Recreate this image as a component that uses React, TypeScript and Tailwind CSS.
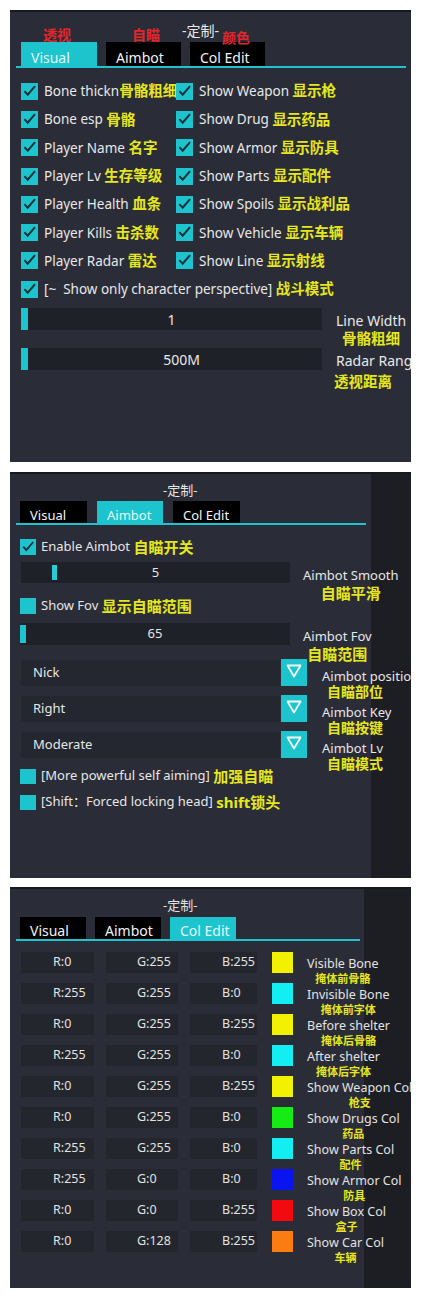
import React from "react"

const FONT = "font-['Noto_Sans','Noto_Sans_CJK_SC',sans-serif]"

const visualRows = [
  ["Bone thickn", "骨骼粗细", "Show Weapon", "显示枪"],
  ["Bone esp", "骨骼", "Show Drug", "显示药品"],
  ["Player Name", "名字", "Show Armor", "显示防具"],
  ["Player Lv", "生存等级", "Show Parts", "显示配件"],
  ["Player Health", "血条", "Show Spoils", "显示战利品"],
  ["Player Kills", "击杀数", "Show Vehicle", "显示车辆"],
  ["Player Radar", "雷达", "Show Line", "显示射线"]
]

const colors = [
  { r: 0, g: 255, b: 255, sw: "bg-[#f2f200]", en: "Visible Bone", zh: "掩体前骨骼" },
  { r: 255, g: 255, b: 0, sw: "bg-[#12eef2]", en: "Invisible Bone", zh: "掩体前字体" },
  { r: 0, g: 255, b: 255, sw: "bg-[#f2f200]", en: "Before shelter", zh: "掩体后骨骼" },
  { r: 255, g: 255, b: 0, sw: "bg-[#12eef2]", en: "After shelter", zh: "掩体后字体" },
  { r: 0, g: 255, b: 255, sw: "bg-[#f2f200]", en: "Show Weapon Col", zh: "枪支" },
  { r: 0, g: 255, b: 0, sw: "bg-[#14ec14]", en: "Show Drugs Col", zh: "药品" },
  { r: 255, g: 255, b: 0, sw: "bg-[#12eef2]", en: "Show Parts Col", zh: "配件" },
  { r: 255, g: 0, b: 0, sw: "bg-[#0a14f0]", en: "Show Armor Col", zh: "防具" },
  { r: 0, g: 0, b: 255, sw: "bg-[#f20a10]", en: "Show Box Col", zh: "盒子" },
  { r: 0, g: 128, b: 255, sw: "bg-[#fb7d12]", en: "Show Car Col", zh: "车辆" }
]

function Box({ checked, size }: { checked?: boolean; size: string }) {
  return (
    <span className={`${size} shrink-0 bg-[#1dc4cd] flex`}>
      {checked && (
        <svg viewBox="0 0 16 16" className="w-full h-full">
          <path d="M3.2 7.6l3.1 3.4 6.9-8" fill="none" stroke="#16303a" strokeWidth="1.9" />
        </svg>
      )}
    </span>
  )
}

function Zh({ children, className = "" }: { children: React.ReactNode; className?: string }) {
  return <span className={`font-bold text-[#e6e61e] ${className}`}>{children}</span>
}

function Tab({ label, on, className }: { label: string; on?: boolean; className: string }) {
  return (
    <div
      className={`${className} shrink-0 flex items-end pl-[10px] ${
        on ? "bg-[#1dc4cd] text-[#e2f8f8]" : "bg-black text-[#f2f2f2]"
      }`}
    >
      {label}
    </div>
  )
}

function Triangle() {
  return (
    <svg viewBox="0 0 16 14" className="w-[16px] h-[14px]">
      <path d="M1.5 1.5H14.5L8 12.5Z" fill="none" stroke="#f4ffff" strokeWidth="1.8" strokeLinejoin="round" />
    </svg>
  )
}

function VisualPanel() {
  return (
    <section className="relative w-[401px] h-[452px] shrink-0 overflow-hidden bg-[#2a2d37] border-t-2 border-[#17191e] text-[#e8e8e8]">
      <div className="h-[30px] pt-[10px] pl-[172px] text-[14px] leading-[18px]">-定制-</div>
      <span className="absolute left-[33px] top-[15px] text-[14px] leading-[16px] font-bold text-[#e3262c]">透视</span>
      <span className="absolute left-[122px] top-[15px] text-[14px] leading-[16px] font-bold text-[#e3262c]">自瞄</span>
      <span className="absolute left-[212px] top-[18px] text-[14px] leading-[16px] font-bold text-[#e3262c]">颜色</span>
      <div className="ml-[6px] w-[390px] pl-[5px] flex gap-[9px] border-b-2 border-[#1dc4cd] text-[14px] leading-[17px]">
        <Tab label="Visual" on className="w-[76px] h-[24px]" />
        <Tab label="Aimbot" className="w-[75px] h-[24px]" />
        <Tab label="Col Edit" className="w-[75px] h-[24px]" />
      </div>

      <div className="mt-[9px] pl-[11px] grid grid-cols-[155px_1fr] auto-rows-[28.3px] text-[13.5px] whitespace-nowrap">
        {visualRows.map((r) => (
          <React.Fragment key={r[0]}>
            <div className="flex items-center">
              <Box checked size="w-[17px] h-[17px]" />
              <span className="ml-[6px]">{r[0]}</span>
              {r[0] != "Bone thickn" && <span>&nbsp;</span>}
              <Zh className="text-[14.5px]">{r[1]}</Zh>
            </div>
            <div className="flex items-center">
              <Box checked size="w-[17px] h-[17px]" />
              <span className="ml-[6px]">{r[2]}&nbsp;</span>
              <Zh className="text-[14.5px]">{r[3]}</Zh>
            </div>
          </React.Fragment>
        ))}
        <div className="col-span-2 flex items-center">
          <Box checked size="w-[17px] h-[17px]" />
          <span className="ml-[6px]">[~&nbsp;&nbsp;Show only character perspective]&nbsp;</span>
          <Zh className="text-[14.5px]">战斗模式</Zh>
        </div>
      </div>

      <div className="mt-[5px] pl-[11px] flex flex-col text-[14px] whitespace-nowrap">
        <div className="flex h-[40px]">
          <div className="relative shrink-0 w-[301px] h-[22px] bg-[#1f2128] flex items-center justify-center">
            <span className="absolute left-0 top-0 w-[7px] h-full bg-[#1dc4cd]" />1
          </div>
          <div className="ml-[14px] pt-[5px] flex flex-col items-center">
            <span className="leading-[16px]">Line Width</span>
            <Zh className="text-[14.5px] leading-[18px]">骨骼粗细</Zh>
          </div>
        </div>
        <div className="flex h-[40px]">
          <div className="relative shrink-0 w-[301px] h-[22px] bg-[#1f2128] flex items-center justify-center">
            <span className="absolute left-0 top-0 w-[7px] h-full bg-[#1dc4cd]" />
            <span className="pl-[20px]">500M</span>
          </div>
          <div className="ml-[14px] pt-[5px] flex flex-col items-start">
            <span className="leading-[16px]">Radar Range</span>
            <Zh className="text-[14.5px] leading-[24px] -ml-[2px]">透视距离</Zh>
          </div>
        </div>
      </div>
    </section>
  )
}

function AimbotPanel() {
  const drops = [
    ["Nick", "Aimbot position", "自瞄部位"],
    ["Right", "Aimbot Key", "自瞄按键"],
    ["Moderate", "Aimbot Lv", "自瞄模式"]
  ]
  return (
    <section className="w-[401px] h-[406px] shrink-0 overflow-hidden border-t-2 border-[#17191e] bg-[linear-gradient(to_right,#2a2d37_361px,#1d1e23_361px)] text-[13px] text-[#e6e6e6] whitespace-nowrap">
      <div className="h-[27px] pt-[8px] pl-[153px] leading-[16px]">-定制-</div>
      <div className="ml-[6px] w-[350px] pl-[4px] flex gap-[10px] border-b-2 border-[#1dc4cd] leading-[16px]">
        <Tab label="Visual" className="w-[67px] h-[22px]" />
        <Tab label="Aimbot" on className="w-[66px] h-[22px]" />
        <Tab label="Col Edit" className="w-[67px] h-[22px]" />
      </div>

      <div className="mt-[10px] pl-[10px] h-[24px] flex items-center">
        <Box checked size="w-[16px] h-[16px]" />
        <span className="ml-[5px]">Enable Aimbot&nbsp;</span>
        <Zh className="text-[15px]">自瞄开关</Zh>
      </div>

      <div className="mt-[3px] pl-[11px] flex h-[21px]">
        <div className="relative shrink-0 w-[269px] h-[21px] bg-[#1f2128] flex items-center justify-center">
          <span className="absolute left-[31px] top-[3px] w-[5px] h-[15px] bg-[#27ccd4]" />5
        </div>
        <div className="ml-[13px] pt-[5px] flex flex-col items-center">
          <span className="leading-[16px]">Aimbot Smooth</span>
          <Zh className="text-[15px] leading-[20px]">自瞄平滑</Zh>
        </div>
      </div>

      <div className="mt-[11px] pl-[10px] h-[24px] flex items-center">
        <Box size="w-[16px] h-[16px]" />
        <span className="ml-[5px]">Show Fov&nbsp;</span>
        <Zh className="text-[15px]">显示自瞄范围</Zh>
      </div>

      <div className="mt-[5px] pl-[10px] flex h-[22px]">
        <div className="relative shrink-0 w-[270px] h-[22px] bg-[#1f2128] flex items-center justify-center">
          <span className="absolute left-0 top-[2px] w-[6px] h-[18px] bg-[#1dc4cd]" />65
        </div>
        <div className="ml-[13px] pt-[5px] flex flex-col items-center">
          <span className="leading-[16px]">Aimbot Fov</span>
          <Zh className="text-[15px] leading-[20px]">自瞄范围</Zh>
        </div>
      </div>

      <div className="mt-[15px] flex flex-col gap-[10px]">
        {drops.map((d) => (
          <div key={d[0]} className="pl-[11px] flex h-[26px]">
            <div className="shrink-0 w-[259px] h-[26px] bg-[#24272f] pl-[12px] flex items-center">{d[0]}</div>
            <div className="shrink-0 ml-px w-[26px] h-[27px] -mt-px bg-[#1dc4cd] flex justify-center pt-[5px]">
              <Triangle />
            </div>
            <div className="ml-[15px] pt-[8px] flex flex-col items-start">
              <span className="leading-[16px]">{d[1]}</span>
              <Zh className="text-[14px] leading-[15px] ml-[5px]">{d[2]}</Zh>
            </div>
          </div>
        ))}
      </div>

      <div className="mt-[8px] pl-[10px] h-[20px] flex items-center">
        <Box size="w-[16px] h-[15px]" />
        <span className="ml-[5px]">[More powerful self aiming]&nbsp;</span>
        <Zh className="text-[15px]">加强自瞄</Zh>
      </div>
      <div className="mt-[6px] pl-[10px] h-[20px] flex items-center">
        <Box size="w-[16px] h-[15px]" />
        <span className="ml-[5px]">[Shift：Forced locking head]&nbsp;</span>
        <Zh className="text-[15px]">shift锁头</Zh>
      </div>
    </section>
  )
}

function ColorPanel() {
  return (
    <section className="w-[401px] h-[401px] shrink-0 overflow-hidden border-t-2 border-[#17191e] bg-[linear-gradient(to_right,#2a2d37_354px,#1d1e23_354px)] text-[13px] text-[#e2e2e2] whitespace-nowrap">
      <div className="h-[28px] pt-[8px] pl-[153px] leading-[16px]">-定制-</div>
      <div className="ml-[6px] w-[344px] pl-[4px] flex gap-[9px] border-b-2 border-[#1dc4cd] text-[14px] leading-[17px]">
        <Tab label="Visual" className="w-[66px] h-[22px]" />
        <Tab label="Aimbot" className="w-[66px] h-[22px]" />
        <Tab label="Col Edit" on className="w-[66px] h-[22px]" />
      </div>

      <div className="mt-[11px] flex flex-col gap-[10px] text-[12.5px]">
        {colors.map((c) => (
          <div key={c.en} className="pl-[11px] flex h-[21px]">
            <div className="shrink-0 w-[73px] h-[21px] bg-[#23262d] pl-[32px] flex items-center">R:{c.r}</div>
            <div className="shrink-0 ml-[12px] w-[72px] h-[21px] bg-[#23262d] pl-[31px] flex items-center">G:{c.g}</div>
            <div className="shrink-0 ml-[12px] w-[67px] h-[21px] bg-[#23262d] pl-[32px] flex items-center">B:{c.b}</div>
            <span className={`ml-[15px] w-[21px] h-[21px] shrink-0 ${c.sw}`} />
            <div className="ml-[14px] pt-[4px] flex flex-col items-center">
              <span className="leading-[15px]">{c.en}</span>
              <Zh className="text-[11px] leading-[16px]">{c.zh}</Zh>
            </div>
          </div>
        ))}
      </div>
    </section>
  )
}

export default function App() {
  return (
    <div className={`${FONT} w-[421px] min-h-[1298px] bg-white pt-[10px] pl-[10px] flex flex-col`}>
      <VisualPanel />
      <div className="h-[10px] shrink-0" />
      <AimbotPanel />
      <div className="h-[9px] shrink-0" />
      <ColorPanel />
    </div>
  )
}
